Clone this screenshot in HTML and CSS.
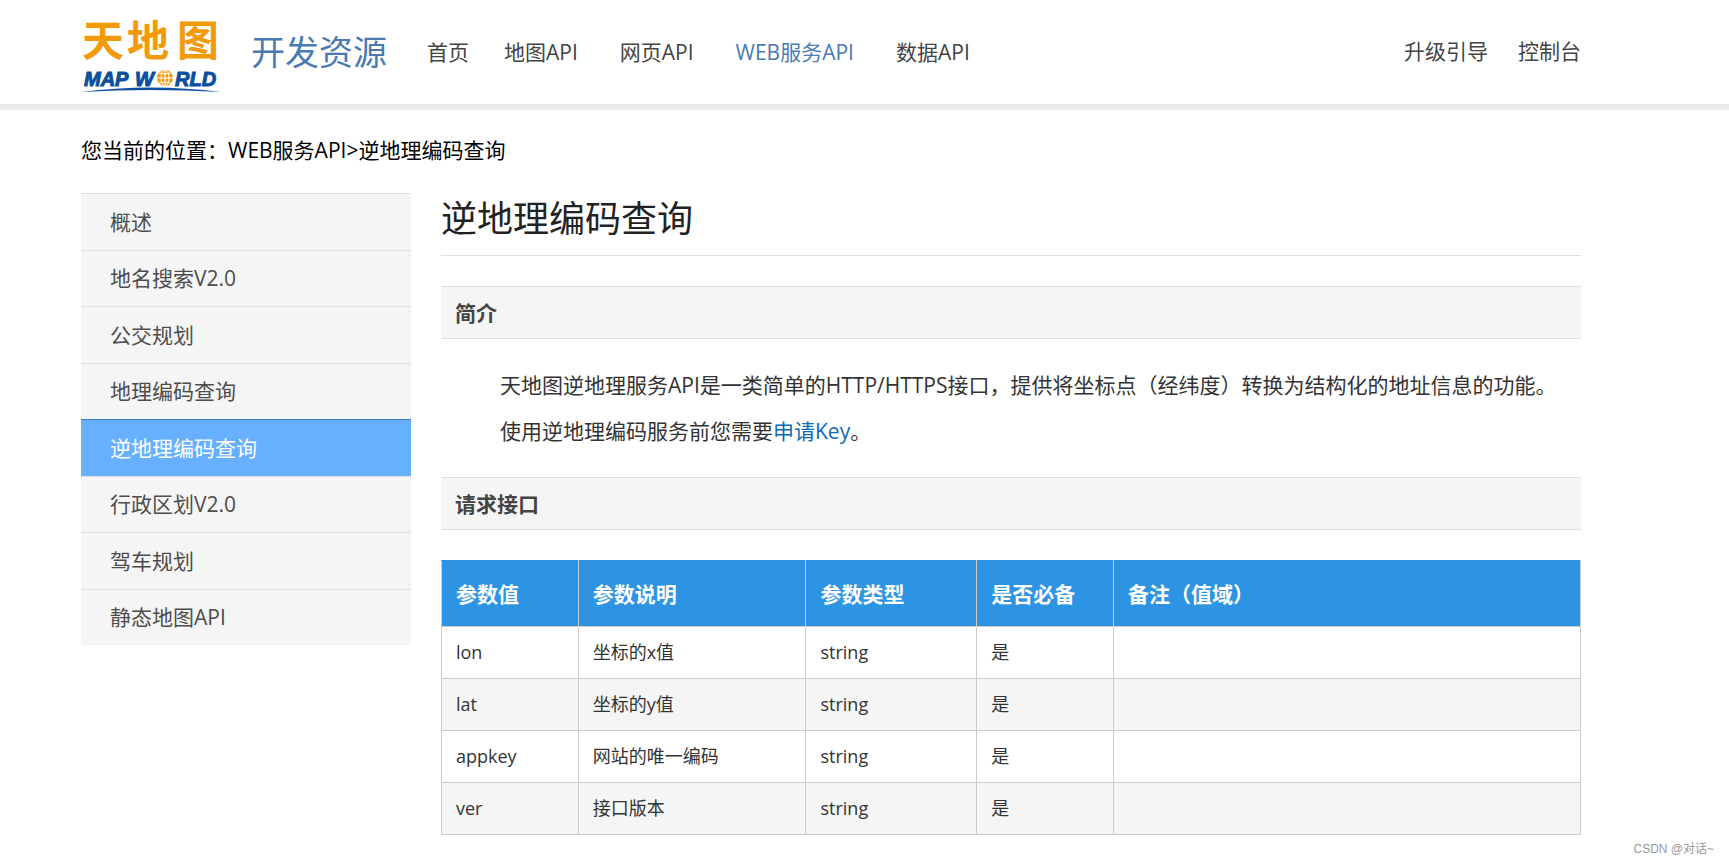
FILE: index.html
```html
<!DOCTYPE html>
<html lang="zh-CN">
<head>
<meta charset="utf-8">
<title>逆地理编码查询</title>
<link rel="stylesheet" href="styles.css">
</head>
<body>
<header class="header">
  <a class="logo" href="#" aria-label="天地图 MAP WORLD">
    <svg width="140" height="96" viewBox="0 0 140 96" aria-hidden="true">
      <g class="logo-cn">
        <text x="1" y="52">天</text>
        <text x="46" y="52">地</text>
        <text x="96" y="52">图</text>
      </g>
      <g class="logo-en">
        <text x="3" y="82">MAP</text>
        <text x="54" y="82">W</text>
        <text x="94" y="82">RLD</text>
      </g>
      <circle cx="84" cy="74" r="8" fill="#f39a0b"/>
      <g fill="none" stroke="#fff" stroke-width="1">
        <ellipse cx="84" cy="74" rx="4" ry="8"/>
        <path d="M84 66v16M76 74h16M78 69q6 2 12 0M78 79q6-2 12 0"/>
      </g>
      <path d="M0 88Q70 79 140 88Q70 84 0 88Z" fill="#0b4f9e"/>
    </svg>
  </a>
  <span class="brand">开发资源</span>
  <nav class="nav">
    <a class="nav-home" href="#">首页</a>
    <a href="#">地图API</a>
    <a href="#">网页API</a>
    <a class="active" href="#">WEB服务API</a>
    <a href="#">数据API</a>
  </nav>
  <div class="user-links">
    <a href="#">升级引导</a>
    <a href="#">控制台</a>
  </div>
</header>

<div class="page">
  <div class="breadcrumb">您当前的位置：WEB服务API&gt;逆地理编码查询</div>
  <div class="columns">
    <nav class="sidebar">
      <a href="#">概述</a>
      <a href="#">地名搜索V2.0</a>
      <a href="#">公交规划</a>
      <a href="#">地理编码查询</a>
      <a class="active" href="#">逆地理编码查询</a>
      <a href="#">行政区划V2.0</a>
      <a href="#">驾车规划</a>
      <a href="#">静态地图API</a>
    </nav>
    <main class="content">
      <h1>逆地理编码查询</h1>
      <h2>简介</h2>
      <div class="intro">
        <p>天地图逆地理服务API是一类简单的HTTP/HTTPS接口，提供将坐标点（经纬度）转换为结构化的地址信息的功能。</p>
        <p>使用逆地理编码服务前您需要<a href="#">申请Key</a>。</p>
      </div>
      <h2>请求接口</h2>
      <table class="params">
        <colgroup>
          <col class="col-name"><col class="col-desc"><col class="col-type"><col class="col-required"><col>
        </colgroup>
        <thead>
          <tr><th>参数值</th><th>参数说明</th><th>参数类型</th><th>是否必备</th><th>备注（值域）</th></tr>
        </thead>
        <tbody>
          <tr><td>lon</td><td>坐标的x值</td><td>string</td><td>是</td><td></td></tr>
          <tr><td>lat</td><td>坐标的y值</td><td>string</td><td>是</td><td></td></tr>
          <tr><td>appkey</td><td>网站的唯一编码</td><td>string</td><td>是</td><td></td></tr>
          <tr><td>ver</td><td>接口版本</td><td>string</td><td>是</td><td></td></tr>
        </tbody>
      </table>
    </main>
  </div>
</div>
<div class="watermark">CSDN @对话~</div>
</body>
</html>
```

FILE: styles.css
```css
* { box-sizing: border-box; }

body {
  margin: 0;
  background: #fff;
  color: #333;
  font: 21px/30px "Open Sans", "Noto Sans CJK SC", sans-serif;
}

a { color: inherit; text-decoration: none; }

.header {
  display: flex;
  align-items: center;
  height: 110px;
  padding: 0 148px 0 81px;
  border-bottom: 6px solid #ebebeb;
  color: #444;
  white-space: nowrap;
}

.logo svg { display: block; }

.logo-cn {
  fill: #f39a0b;
  font: 700 42px "Noto Sans CJK SC", sans-serif;
}

.logo-en {
  fill: #0b4f9e;
  stroke: #0b4f9e;
  stroke-width: 1px;
  font: italic 700 20px "Liberation Sans", sans-serif;
}

.brand {
  margin-left: 30px;
  color: #4a7ab3;
  font-size: 34px;
  line-height: 50px;
}

.nav { display: flex; gap: 42px; margin-left: 40px; }
.nav-home { margin-right: -7px; }
.nav .active { color: #4a7ab3; }

.user-links { display: flex; gap: 30px; margin-left: auto; padding-bottom: 2px; }

.page { padding: 25px 148px 28px 81px; }

.breadcrumb { color: #000; }

.columns { display: flex; align-items: flex-start; gap: 30px; margin-top: 28px; }

.sidebar {
  display: grid;
  grid-auto-rows: 1fr;
  flex: 0 0 330px;
  min-height: 452px;
  background: #f5f5f5;
  color: #4d4d4d;
}

.sidebar a {
  display: flex;
  align-items: center;
  padding: 0 29px;
  border-top: 1px solid #e0e0e0;
}

.sidebar .active {
  border-top-color: #3f7cb8;
  background: #66b0ff;
  color: #fff;
}

.content { flex: 1; min-width: 0; }

h1 {
  margin: 0 0 30px;
  padding: 1px 0 11px;
  border-bottom: 1px solid #e0e0e0;
  color: #222;
  font-size: 36px;
  font-weight: 400;
  line-height: 50px;
}

h2 {
  margin: 0;
  padding: 11px 14px 10px;
  border: solid #e0e0e0;
  border-width: 1px 0;
  background: #f5f5f5;
  color: #444;
  font-size: 21px;
  line-height: 30px;
}

.intro { padding: 23px 14px 23px 59px; }
.intro p { margin: 0; line-height: 46px; }
.intro a { color: #0f69b4; }

.params {
  width: 100%;
  margin-top: 30px;
  border-collapse: collapse;
  table-layout: fixed;
}

.col-name, .col-required { width: 12%; }
.col-desc { width: 20%; }
.col-type { width: 15%; }

.params th, .params td {
  padding: 10px 14px 11px;
  border: 1px solid #ccc;
  text-align: left;
}

.params th {
  padding: 18px 14px 17px;
  border-top-color: #2d93e3;
  background: #2d93e3;
  color: #fff;
}

.params td { font-size: 18px; }
.params tbody tr:nth-child(even) { background: #f5f5f5; }

.watermark {
  position: absolute;
  right: 15px;
  bottom: 6px;
  color: #999;
  font: 12px/18px "Liberation Sans", "Noto Sans CJK SC", sans-serif;
}
```
